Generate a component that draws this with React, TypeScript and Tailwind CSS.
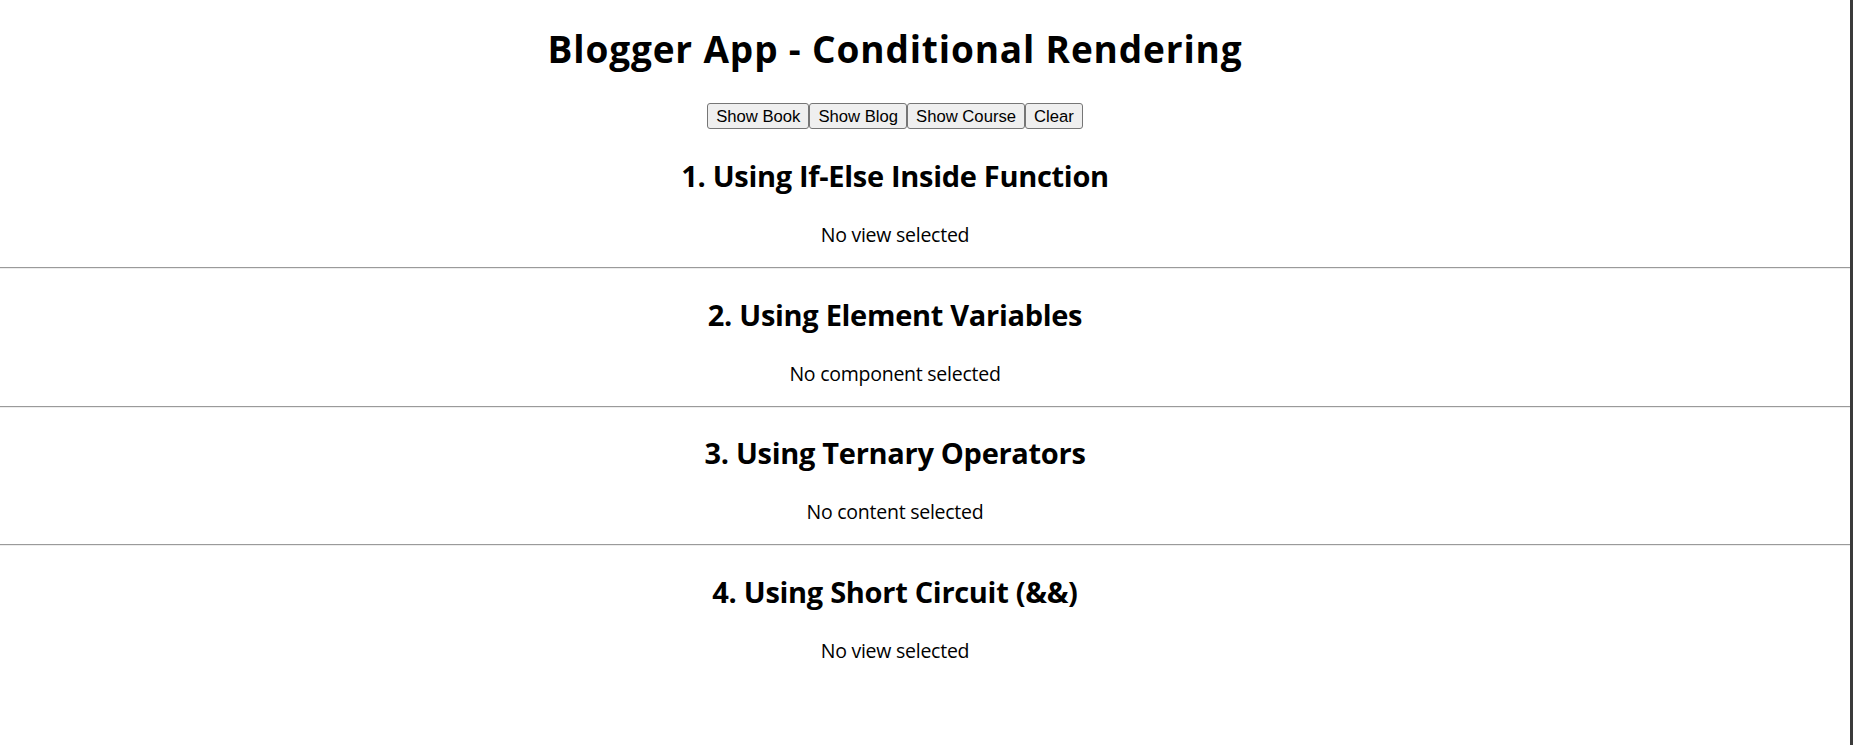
const sections = [
  { title: '1. Using If-Else Inside Function', text: 'No view selected' },
  { title: '2. Using Element Variables', text: 'No component selected' },
  { title: '3. Using Ternary Operators', text: 'No content selected' },
  { title: '4. Using Short Circuit (&&)', text: 'No view selected' },
];

const buttons = ['Show Book', 'Show Blog', 'Show Course', 'Clear'];

export default function App() {
  return (
    <div className="min-h-screen border-r-[3px] border-[#3b3b3b] bg-white font-['Segoe_UI','Open_Sans',sans-serif] text-black">
      {/* Header */}
      <div className="pr-[60px] pt-[30px] text-center">
        <h1 className="text-[37px] font-bold leading-[37px] tracking-[0.85px]">
          Blogger App - Conditional Rendering
        </h1>
        <div className="mt-[36px] flex justify-center">
          {buttons.map((b) => (
            <button
              key={b}
              className="h-[26px] rounded-[3px] border border-[#767676] bg-[#efefef] px-[8px] font-['Liberation_Sans',Arial,sans-serif] text-[16.67px] leading-[19px] text-black"
            >
              {b}
            </button>
          ))}
        </div>
      </div>

      {sections.map((s, i) => (
        <div key={s.title}>
          <div className={`pr-[60px] text-center ${i === 0 ? 'pt-[32px]' : 'pt-[30.5px]'}`}>
            <h2 className="text-[29px] font-bold leading-[30px] tracking-[-0.3px]">{s.title}</h2>
            <p className="mt-[34px] text-[19.5px] leading-[20px] tracking-[-0.25px]">{s.text}</p>
          </div>
          {i < sections.length - 1 && (
            <hr className="mt-[22px] border-0 border-t border-b border-t-[#9a9a9a] border-b-[#ededed]" />
          )}
        </div>
      ))}
    </div>
  );
}
